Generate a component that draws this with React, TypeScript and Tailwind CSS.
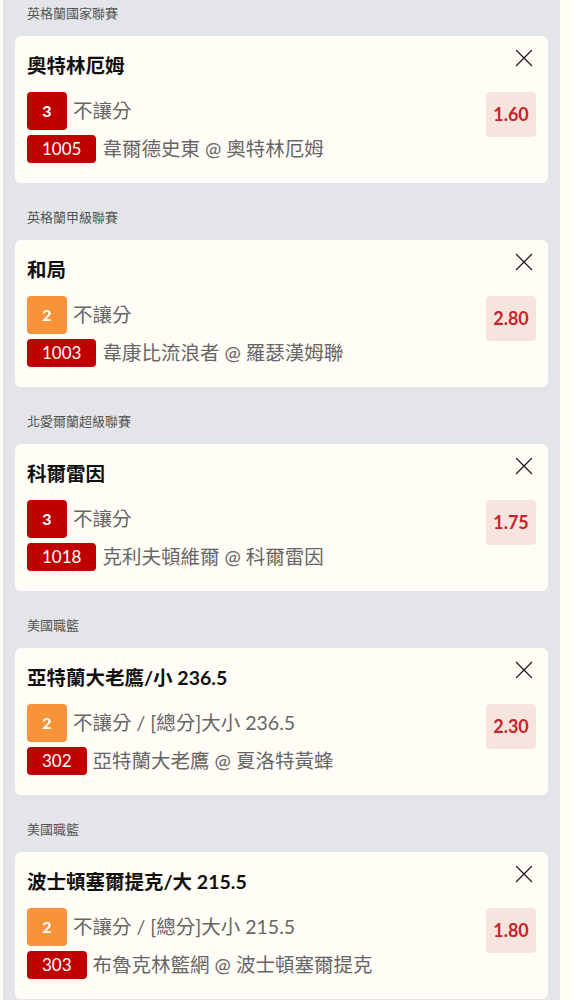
const bets = [
  {
    league: "英格蘭國家聯賽",
    title: "奧特林厄姆",
    num: "3",
    orange: false,
    desc: "不讓分",
    code: "1005",
    match: "韋爾德史東 @ 奧特林厄姆",
    odds: "1.60",
  },
  {
    league: "英格蘭甲級聯賽",
    title: "和局",
    num: "2",
    orange: true,
    desc: "不讓分",
    code: "1003",
    match: "韋康比流浪者 @ 羅瑟漢姆聯",
    odds: "2.80",
  },
  {
    league: "北愛爾蘭超級聯賽",
    title: "科爾雷因",
    num: "3",
    orange: false,
    desc: "不讓分",
    code: "1018",
    match: "克利夫頓維爾 @ 科爾雷因",
    odds: "1.75",
  },
  {
    league: "美國職籃",
    title: "亞特蘭大老鷹/小 236.5",
    num: "2",
    orange: true,
    desc: "不讓分 / [總分]大小 236.5",
    code: "302",
    match: "亞特蘭大老鷹 @ 夏洛特黃蜂",
    odds: "2.30",
  },
  {
    league: "美國職籃",
    title: "波士頓塞爾提克/大 215.5",
    num: "2",
    orange: true,
    desc: "不讓分 / [總分]大小 215.5",
    code: "303",
    match: "布魯克林籃網 @ 波士頓塞爾提克",
    odds: "1.80",
  },
];

export default function App() {
  return (
    <div
      className="h-[1000px] overflow-hidden bg-[#fffdf5] pl-[3px] pr-[12px]"
      style={{ fontFamily: "Lato, 'Noto Sans CJK TC', sans-serif" }}
    >
      <div className="h-full bg-[#e4e5e9] px-[12px] pt-[3px] flex flex-col gap-[24px]">
        {bets.map((b, i) => (
          <div key={i}>
            <div className="h-[20px] leading-[20px] mb-[13px] pl-[12px] text-[13px] text-[#555]">
              {b.league}
            </div>
            <div className="relative h-[147px] rounded-[6px] bg-[#fffdf6] px-[12px] pt-[16px]">
              <svg
                className="absolute right-[15px] top-[13px]"
                width="18"
                height="18"
                viewBox="0 0 18 18"
                fill="none"
                stroke="#222"
                strokeWidth="1.4"
                strokeLinecap="round"
              >
                <path d="M1.5 1.5L16.5 16.5M16.5 1.5L1.5 16.5" />
              </svg>
              <div className="h-[28px] leading-[28px] text-[19.5px] font-bold text-[#111]">
                {b.title}
              </div>
              <div className="mt-[12px] flex">
                <div className="flex-1 flex flex-col gap-[5px]">
                  <div className="flex items-center gap-[6px] h-[38px]">
                    <span
                      className={`w-[40px] h-[38px] rounded-[4px] flex items-center justify-center text-white text-[16px] font-bold ${
                        b.orange ? "bg-[#f7943a]" : "bg-[#c00000]"
                      }`}
                    >
                      {b.num}
                    </span>
                    <span className="text-[19.5px] leading-[28px] text-[#666]">{b.desc}</span>
                  </div>
                  <div className="flex items-center gap-[6px] h-[28px]">
                    <span className="h-[28px] px-[15px] rounded-[4px] bg-[#c00000] flex items-center text-white text-[17px]">
                      {b.code}
                    </span>
                    <span className="text-[19.5px] leading-[28px] text-[#666]">{b.match}</span>
                  </div>
                </div>
                <div className="w-[50px] h-[45px] rounded-[4px] bg-[#f8e4df] flex items-center justify-center text-[18px] font-bold text-[#c3262c]">
                  {b.odds}
                </div>
              </div>
            </div>
          </div>
        ))}
      </div>
    </div>
  );
}
